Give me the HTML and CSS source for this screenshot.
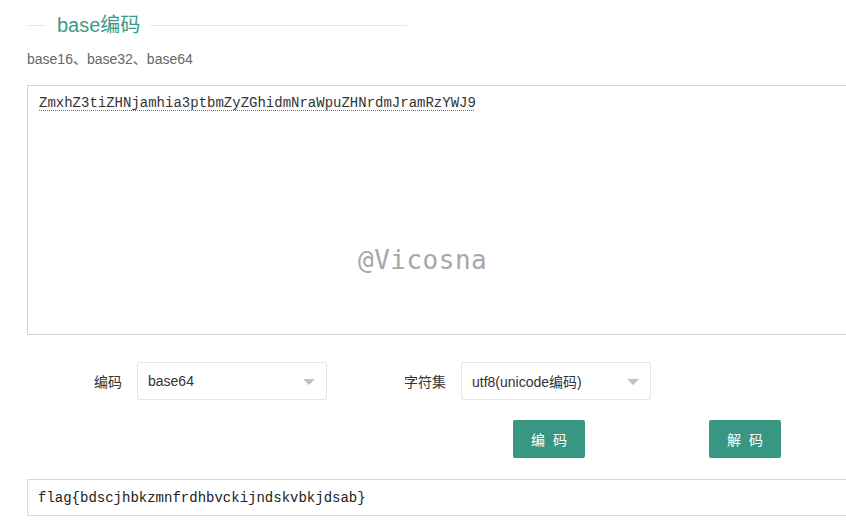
FILE: index.html
```html
<!DOCTYPE html>
<html lang="zh-CN">
<head>
<meta charset="utf-8">
<title>base编码</title>
<link rel="stylesheet" href="styles.css">
</head>
<body>
<div class="page">
  <div class="title-row">
    <span class="title-line short"></span>
    <span class="title">base编码</span>
    <span class="title-line long"></span>
  </div>
  <div class="subtitle">base16、base32、base64</div>

  <div class="input-wrap">
    <div class="input-box"><span class="spell">ZmxhZ3tiZHNjamhia3ptbmZyZGhidmNraWpuZHNrdmJramRzYWJ9</span></div>
    <div class="watermark">@Vicosna</div>
  </div>

  <div class="form-row">
    <label class="form-label">编码</label>
    <div class="select"><span>base64</span><i class="arrow"></i></div>
    <label class="form-label">字符集</label>
    <div class="select"><span>utf8(unicode编码)</span><i class="arrow"></i></div>
  </div>

  <div class="btn-row">
    <button class="btn">编 码</button>
    <button class="btn">解 码</button>
  </div>

  <div class="output-box">flag{bdscjhbkzmnfrdhbvckijndskvbkjdsab}</div>
</div>
</body>
</html>
```

FILE: styles.css
```css
html, body {
  margin: 0;
  padding: 0;
  background: #fff;
  overflow: hidden;
}
body {
  font-family: "Liberation Sans", "Noto Sans CJK SC", sans-serif;
  color: #333;
}
.page {
  padding: 12px 0 0 27px;
}
.title-row {
  display: flex;
  align-items: center;
  width: 380px;
  height: 26px;
}
.title-line {
  height: 1px;
  background: #e6e6e6;
}
.title-line.short {
  width: 19px;
  margin-right: 11px;
}
.title-line.long {
  flex: 1;
  margin-left: 10px;
}
.title {
  font-size: 20px;
  line-height: 26px;
  color: #3a9a87;
}
.subtitle {
  margin-top: 12px;
  font-size: 14px;
  line-height: 18px;
  color: #666;
}
.input-wrap {
  position: relative;
  margin-top: 17px;
}
.input-box {
  box-sizing: border-box;
  height: 250px;
  border: 1px solid #d2d2d2;
  border-right: none;
  padding: 8px 11px;
  font-family: "Liberation Mono", monospace;
  font-size: 14px;
  line-height: 18px;
  color: #333;
}
.spell {
  text-decoration: underline dotted #e8424f;
  text-underline-offset: 3px;
  text-decoration-thickness: 1px;
}
.watermark {
  position: absolute;
  left: 331px;
  top: 160px;
  font-family: "DejaVu Sans Mono", monospace;
  font-size: 26px;
  letter-spacing: 0.5px;
  line-height: 30px;
  color: #a8a8a8;
}
.form-row {
  display: grid;
  grid-template-columns: 110px 190px 134px 190px;
  align-items: center;
  margin-top: 27px;
}
.form-label {
  text-align: right;
  padding-right: 15px;
  font-size: 14px;
  color: #333;
}
.select {
  box-sizing: border-box;
  height: 38px;
  border: 1px solid #e6e6e6;
  border-radius: 2px;
  display: flex;
  align-items: center;
  justify-content: space-between;
  padding: 0 11px 0 10px;
  font-size: 14px;
  color: #333;
}
.arrow {
  width: 0;
  height: 0;
  border-left: 6px solid transparent;
  border-right: 6px solid transparent;
  border-top: 6px solid #c2c2c2;
  margin-top: 1px;
}
.btn-row {
  display: flex;
  gap: 124px;
  margin-top: 20px;
  padding-left: 486px;
}
.btn {
  width: 72px;
  height: 38px;
  border: none;
  border-radius: 2px;
  background: #389783;
  color: #fff;
  font-family: "Noto Sans CJK SC", sans-serif;
  font-size: 14px;
  word-spacing: 5px;
  padding: 0;
}
.output-box {
  box-sizing: border-box;
  margin-top: 21px;
  height: 37px;
  border: 1px solid #d9d9d9;
  border-right: none;
  padding: 0 10px;
  display: flex;
  align-items: center;
  font-family: "Liberation Mono", monospace;
  font-size: 14px;
  color: #222;
}
```
